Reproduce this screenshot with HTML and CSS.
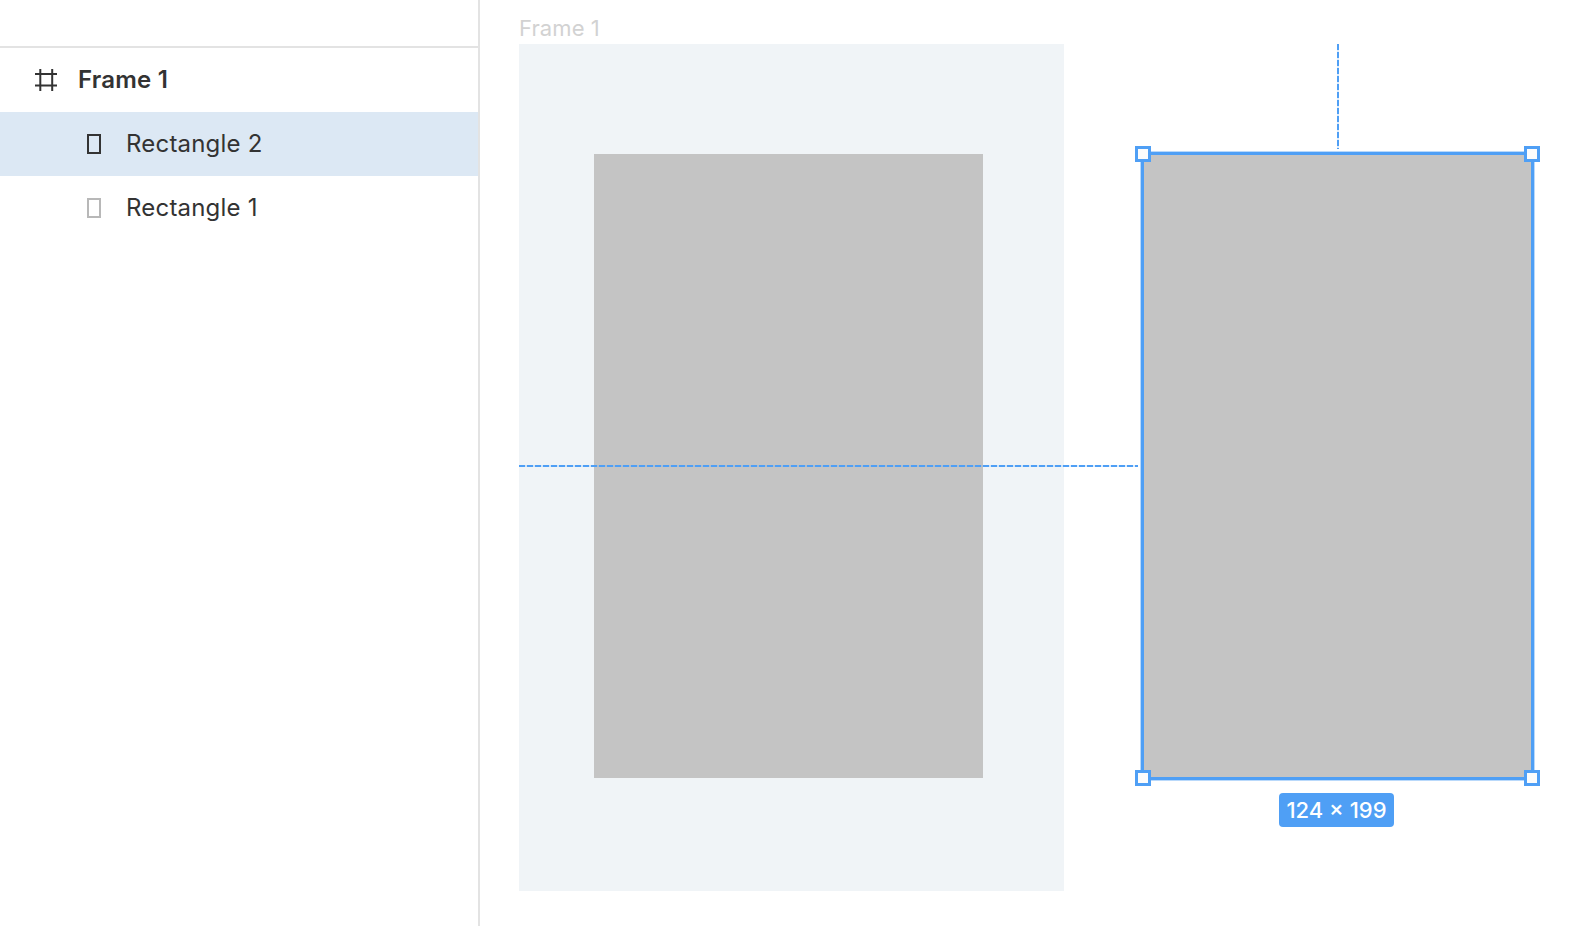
FILE: index.html

```html
<!DOCTYPE html>
<html lang="en">
<head>
  <meta charset="UTF-8">
  <title>Frame 1</title>
  <link rel="stylesheet" href="styles.css">
</head>
<body>
  <div class="app">
    <aside class="sidebar">
      <div class="sidebar-head"></div>
      <ul class="layers">
        <li class="layer layer-frame">
          <svg class="icon-frame" width="22" height="22" viewBox="0 0 22 22">
            <path d="M5.3 0V22M17.2 0V22M0 5H22M0 16.5H22" fill="none" stroke="currentColor" stroke-width="2"/>
          </svg>
          <span class="layer-name">Frame 1</span>
        </li>
        <li class="layer layer-child selected">
          <span class="icon-rect"></span>
          <span class="layer-name">Rectangle 2</span>
        </li>
        <li class="layer layer-child">
          <span class="icon-rect muted"></span>
          <span class="layer-name">Rectangle 1</span>
        </li>
      </ul>
    </aside>

    <main class="canvas">
      <div class="frame-label">Frame 1</div>
      <div class="frame">
        <div class="rect rect-inner"></div>
      </div>

      <div class="guide guide-h"></div>
      <div class="guide guide-v"></div>

      <div class="rect rect-selected">
        <span class="handle tl"></span>
        <span class="handle tr"></span>
        <span class="handle bl"></span>
        <span class="handle br"></span>
      </div>
      <div class="size-label">124 × 199</div>
    </main>
  </div>
</body>
</html>
```

FILE: styles.css

```css
:root {
  --blue: #4f9ff5;
  --border: #e3e3e3;
  --text: #333333;
}

* {
  margin: 0;
  padding: 0;
  box-sizing: border-box;
}

body {
  font-family: Inter, "Noto Sans", sans-serif;
  background: #ffffff;
  color: var(--text);
  overflow: hidden;
}

.app {
  display: flex;
  height: 926px;
}

/* layers panel */
.sidebar {
  width: 480px;
  flex-shrink: 0;
  border-right: 2px solid var(--border);
}

.sidebar-head {
  height: 48px;
  border-bottom: 2px solid var(--border);
}

.layers {
  list-style: none;
}

.layer {
  height: 64px;
  display: flex;
  align-items: center;
  font-size: 24px;
}

.layer-name {
  margin-bottom: 2px;
  letter-spacing: 0.2px;
}

.layer-frame {
  padding-left: 35px;
  gap: 21px;
  font-weight: 600;
}

.layer-child {
  padding-left: 87px;
  gap: 25px;
}

.selected {
  background: #dce8f4;
}

.icon-rect {
  width: 14px;
  height: 20px;
  border: 2px solid var(--text);
}

.icon-rect.muted {
  border-color: #b8b8b8;
}

/* canvas: everything here sits at its own place on the board */
.canvas {
  position: relative;
  flex: 1;
}

.frame-label {
  position: absolute;
  left: 39px;
  top: 15px;
  font-size: 22px;
  line-height: 27px;
  letter-spacing: 0.1px;
  color: #d2d2d2;
}

.frame {
  position: absolute;
  left: 39px;
  top: 44px;
  width: 545px;
  height: 847px;
  background: #f0f4f7;
}

.rect {
  position: absolute;
  background: #c4c4c4;
}

.rect-inner {
  left: 75px;
  top: 110px;
  width: 389px;
  height: 624px;
}

.rect-selected {
  left: 661px;
  top: 152px;
  width: 393px;
  height: 628px;
  border: 3px solid var(--blue);
  box-shadow: 0 0 0 1px rgba(79, 159, 245, 0.4);
}

.handle {
  position: absolute;
  width: 16px;
  height: 16px;
  background: #fcfcfc;
  border: 3px solid var(--blue);
}

.tl { left: -9px; top: -9px; }
.tr { right: -9px; top: -9px; }
.bl { left: -9px; bottom: -9px; }
.br { right: -9px; bottom: -9px; }

.guide {
  position: absolute;
}

.guide-h {
  left: 39px;
  top: 465px;
  width: 619px;
  height: 2px;
  background: repeating-linear-gradient(90deg, var(--blue) 0 6px, rgba(79, 159, 245, 0.2) 6px 8px);
}

.guide-v {
  left: 857px;
  top: 44px;
  width: 2px;
  height: 105px;
  background: repeating-linear-gradient(180deg, var(--blue) 0 6px, rgba(79, 159, 245, 0.2) 6px 8px);
}

.size-label {
  position: absolute;
  left: 799px;
  top: 793px;
  width: 115px;
  height: 34px;
  border-radius: 4px;
  background: var(--blue);
  color: #ffffff;
  font-size: 22px;
  font-weight: 500;
  line-height: 34px;
  text-align: center;
}
```
